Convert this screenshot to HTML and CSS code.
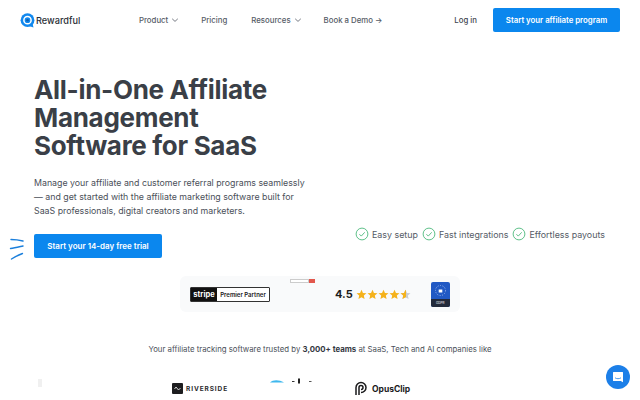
FILE: index.html
```html
<!DOCTYPE html>
<html lang="en">
<head>
    <meta charset="UTF-8">
    <meta name="viewport" content="width=device-width, initial-scale=1.0">
    <title>Rewardful</title>
    <link rel="stylesheet" href="styles.css">
</head>
<body>

<svg class="defs" width="0" height="0">
    <symbol id="star" viewBox="0 0 24 24">
        <path d="M12 1.500l3.200 7 7.600.8-5.700 5.100 1.600 7.500L12 18.100l-6.700 3.800 1.600-7.500L1.200 9.300l7.600-.8z"/>
    </symbol>
    <symbol id="check" viewBox="0 0 14 14">
        <circle cx="7" cy="7" r="5.900" fill="none" stroke="#4cb97c" stroke-width="0.900"/>
        <path d="M4.400 7.200l1.900 1.900 3.400-3.800" fill="none" stroke="#4cb97c" stroke-width="0.900"/>
    </symbol>
    <symbol id="chevron" viewBox="0 0 8 8">
        <path d="M1.200 2.800L4 5.400l2.800-2.600" fill="none" stroke="#555b66" stroke-width="0.800"/>
    </symbol>
</svg>

<header class="topbar">
    <a class="logo" href="#">
        <svg width="15" height="15" viewBox="0 0 15 15">
            <circle cx="7.500" cy="7.200" r="6.900" fill="#1188ee"/>
            <path d="M9 13l4.500 1.500-1-4z" fill="#1188ee"/>
            <circle cx="7.500" cy="7.200" r="3.600" fill="none" stroke="#fff" stroke-width="1.500"/>
            <circle cx="7.500" cy="7.200" r="1.300" fill="#0c5fb0"/>
        </svg>
        <span>Rewardful</span>
    </a>
    <nav class="menu">
        <a href="#" class="menu-item item-product">Product <svg width="8" height="8"><use href="#chevron"/></svg></a>
        <a href="#" class="menu-item item-pricing">Pricing</a>
        <a href="#" class="menu-item item-resources">Resources <svg width="8" height="8"><use href="#chevron"/></svg></a>
        <a href="#" class="menu-item">Book a Demo →</a>
    </nav>
    <a href="#" class="login">Log in</a>
    <a href="#" class="btn btn-nav">Start your affiliate program</a>
</header>

<main class="hero">
    <div class="hero-left">
        <h1>All-in-One Affiliate Management Software for SaaS</h1>
        <p>Manage your affiliate and customer referral programs seamlessly — and get started with the affiliate marketing software built for SaaS professionals, digital creators and marketers.</p>
        <div class="cta-wrap">
            <svg class="sparks" width="16" height="24" viewBox="0 0 16 24">
                <path d="M2 2.500c3 0 8 .5 12 1.500M1.500 11.500c4-.5 8-1.500 12.500-2.500M2.500 22c3-2 7-4 11-5.500" fill="none" stroke="#1b7fdc" stroke-width="1.400" stroke-linecap="round"/>
            </svg>
            <a href="#" class="btn btn-cta">Start your 14-day free trial</a>
        </div>
    </div>
    <ul class="checks">
        <li><svg width="14" height="14"><use href="#check"/></svg>Easy setup</li>
        <li><svg width="14" height="14"><use href="#check"/></svg>Fast integrations</li>
        <li><svg width="14" height="14"><use href="#check"/></svg>Effortless payouts</li>
    </ul>
</main>

<section class="badges">
    <div class="stripe">
        <span class="stripe-name">stripe</span>
        <span class="stripe-text">Premier Partner</span>
    </div>
    <div class="capterra"><span class="capterra-box"></span><span class="capterra-red"></span></div>
    <div class="rating">
        <strong>4.5</strong>
        <span class="stars">
            <svg width="11" height="11"><use href="#star"/></svg>
            <svg width="11" height="11"><use href="#star"/></svg>
            <svg width="11" height="11"><use href="#star"/></svg>
            <svg width="11" height="11"><use href="#star"/></svg>
            <span class="half-star">
                <svg class="star-grey" width="11" height="11"><use href="#star"/></svg>
                <span class="half-fill"><svg width="11" height="11"><use href="#star"/></svg></span>
            </span>
        </span>
    </div>
    <div class="gdpr">
        <svg width="19" height="17" viewBox="0 0 19 17">
            <circle cx="9.500" cy="8.500" r="5" fill="none" stroke="#9db8ee" stroke-width="1" stroke-dasharray="1 1.500"/>
            <rect x="7.700" y="7.500" width="3.600" height="3" fill="#fff"/>
        </svg>
        <span class="gdpr-foot">GDPR</span>
    </div>
</section>

<p class="trusted">Your affiliate tracking software trusted by <strong>3,000+ teams</strong> at SaaS, Tech and AI companies like</p>

<section class="logos">
    <span class="logo-faint"></span>
    <span class="riverside">
        <svg width="11" height="11" viewBox="0 0 11 11">
            <rect width="11" height="11" rx="1" fill="#1d1d1f"/>
            <path d="M2.500 6l1.500-2 2.500 3 2-2" fill="none" stroke="#fff" stroke-width="0.800"/>
        </svg>
        RIVERSIDE
    </span>
    <span class="clipped">
        <svg width="42" height="6" viewBox="0 0 42 6">
            <path d="M0 4.500C3 1.500 9 1.500 14 4.500z" fill="#3fb8ee"/>
            <rect x="28" y="0.500" width="2" height="5" fill="#222"/>
            <rect x="22" y="3" width="2.500" height="1" fill="#333"/>
            <rect x="39" y="3" width="2.500" height="1" fill="#555"/>
        </svg>
    </span>
    <span class="opus">
        <svg width="14" height="15" viewBox="0 0 14 15">
            <path d="M2 14V6.500a5 5 0 1 1 5 5M5 14V6.500a2 2 0 1 1 2 2" fill="none" stroke="#1a1a1c" stroke-width="1.500"/>
        </svg>
        OpusClip
    </span>
</section>

<a href="#" class="chat">
    <svg width="12" height="12" viewBox="0 0 12 12">
        <path d="M1.500 1h9a.5.5 0 0 1 .5.500v9.800L8.800 10H1.500a.5.5 0 0 1-.5-.5v-8a.5.5 0 0 1 .5-.5z" fill="#fff"/>
        <path d="M3 6.800c1.800 1.200 4.200 1.200 6 0" fill="none" stroke="#1c7fe8" stroke-width="0.800"/>
    </svg>
</a>

</body>
</html>
```

FILE: styles.css
```css
body {
    font-family: Inter, "Liberation Sans", sans-serif;
    margin: 0;
    padding: 0;
    background-color: #fff;
    color: #40454e;
    height: 400px;
    overflow: hidden;
    position: relative;
}

a {
    color: inherit;
    text-decoration: none;
}

svg {
    display: block;
}

.defs {
    position: absolute;
}

.topbar {
    display: flex;
    align-items: center;
    height: 24px;
    padding: 8px 20px 0;
    font-size: 7.800px;
    font-weight: 500;
}

.logo {
    display: flex;
    align-items: center;
    gap: 1px;
    width: 119px;
    font-size: 9.200px;
    color: #2b2f36;
}

.menu {
    display: flex;
    flex: 1;
    color: #555b66;
}

.menu-item {
    display: flex;
    align-items: center;
    gap: 3px;
}

.item-product {
    margin-right: 22px;
}

.item-pricing {
    margin-right: 24px;
}

.item-resources {
    margin-right: 22px;
}

.login {
    margin-right: 16px;
    color: #40454e;
}

.btn {
    display: flex;
    align-items: center;
    justify-content: center;
    background-color: #0b87ee;
    color: #fff;
    border-radius: 2px;
    font-weight: 600;
    font-size: 7.800px;
}

.btn-nav {
    width: 127px;
    height: 24px;
}

.hero {
    display: flex;
    align-items: flex-end;
    padding: 0 34px;
    margin-top: 44px;
}

.hero-left {
    width: 290px;
}

h1 {
    margin: 0;
    width: 250px;
    font-size: 26px;
    line-height: 28px;
    font-weight: 700;
    letter-spacing: -0.300px;
    color: #3a3f47;
}

.hero-left p {
    margin: 16px 0 0;
    width: 276px;
    font-size: 8.800px;
    line-height: 14px;
    color: #4b5059;
}

.cta-wrap {
    position: relative;
    margin-top: 16px;
}

.sparks {
    position: absolute;
    left: -25px;
    top: 3px;
}

.btn-cta {
    width: 128px;
    height: 24px;
    font-size: 8px;
}

.checks {
    display: flex;
    gap: 4px;
    list-style: none;
    margin: 0 0 17px 31px;
    padding: 0;
    font-size: 8.900px;
    color: #555b66;
    white-space: nowrap;
}

.checks li {
    display: flex;
    align-items: center;
    gap: 3px;
}

.badges {
    position: relative;
    display: flex;
    align-items: center;
    width: 260px;
    height: 36px;
    margin: 18px 0 0 180px;
    padding: 0 10px;
    background-color: #f9fafb;
    border-radius: 6px;
}

.stripe {
    display: flex;
    width: 80px;
    height: 15px;
    border: 1px solid #333;
    box-sizing: border-box;
    background-color: #fff;
    border-radius: 1px;
}

.stripe-name {
    width: 26px;
    background-color: #111;
    color: #fff;
    font-size: 7.500px;
    font-weight: 700;
    text-align: center;
    line-height: 13px;
}

.stripe-text {
    flex: 1;
    text-align: center;
    line-height: 13px;
    font-weight: 600;
    color: #222;
    font-size: 6px;
}

.capterra {
    position: absolute;
    left: 110px;
    top: 3px;
    display: flex;
}

.capterra-box {
    width: 19px;
    height: 4px;
    border: 1px solid #ccc;
    box-sizing: border-box;
    background-color: #fff;
}

.capterra-red {
    width: 6px;
    height: 4px;
    background-color: #e2574c;
}

.rating {
    display: flex;
    align-items: center;
    gap: 3px;
    margin-left: 65px;
}

.rating strong {
    font-size: 11px;
    color: #1c1c1c;
}

.stars {
    display: flex;
    fill: #f5b21b;
}

.half-star {
    position: relative;
    width: 11px;
    height: 11px;
}

.star-grey {
    fill: #c8ccd2;
}

.half-fill {
    position: absolute;
    left: 0;
    top: 0;
    width: 6px;
    height: 11px;
    overflow: hidden;
}

.gdpr {
    display: flex;
    flex-direction: column;
    width: 19px;
    height: 25px;
    margin-left: 20px;
    background-color: #2159c4;
    border-radius: 2px;
    overflow: hidden;
}

.gdpr-foot {
    flex: 1;
    background-color: #232a3a;
    color: #fff;
    font-size: 3px;
    line-height: 8px;
    text-align: center;
}

.trusted {
    margin: 31px 0 0;
    text-align: center;
    font-size: 7.800px;
    line-height: 12px;
    color: #4b5059;
}

.trusted strong {
    color: #33373f;
}

.logos {
    position: relative;
    display: flex;
    align-items: flex-start;
    height: 20px;
    margin-top: 23px;
    padding-left: 38px;
}

.logo-faint {
    width: 4px;
    height: 8px;
    margin-top: 1px;
    background-color: #f0f0f0;
}

.riverside {
    display: flex;
    align-items: center;
    gap: 3px;
    margin-left: 130px;
    margin-top: 5px;
    font-size: 6.500px;
    font-weight: 700;
    letter-spacing: 0.900px;
    color: #2a2a2d;
}

.clipped {
    margin-left: 42px;
    line-height: 0;
}

.opus {
    display: flex;
    align-items: center;
    gap: 4px;
    margin-left: 42px;
    margin-top: 3px;
    font-size: 8.500px;
    font-weight: 700;
    color: #1a1a1c;
}

.chat {
    position: absolute;
    left: 606px;
    top: 365px;
    display: flex;
    align-items: center;
    justify-content: center;
    width: 24px;
    height: 24px;
    border-radius: 50%;
    background-color: #1c7fe8;
}
```
